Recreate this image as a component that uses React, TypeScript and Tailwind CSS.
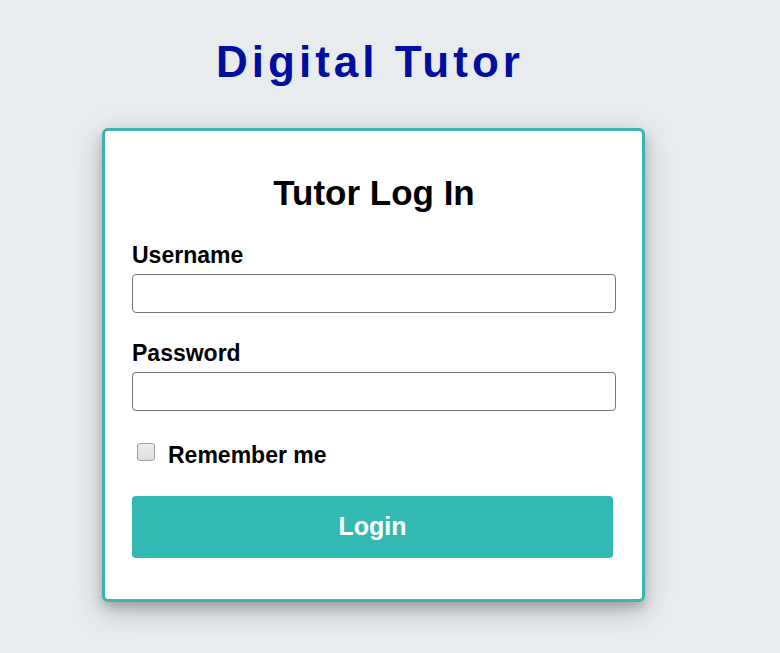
export default function App() {
  return (
    <main className="flex min-h-screen flex-col items-center bg-[#e8ecef] pr-[33px] pt-8 font-['Liberation_Sans',Arial,sans-serif] text-black">
      <h1 className="pr-[7px] text-[44px] leading-[60px] font-bold tracking-[4px] text-[#000f9f]">Digital Tutor</h1>
      <form className="mt-9 w-full max-w-[543px] rounded-[6px] border-3 border-[#3cb3ae] bg-white pt-10 pr-[26px] pb-[41px] pl-[27px] shadow-[0_6px_12px_rgba(0,0,0,0.2),0_9px_30px_rgba(0,0,0,0.19)]" onSubmit={(e) => e.preventDefault()}>
        <h2 className="text-center text-[35px] leading-[44px] font-bold">Tutor Log In</h2>
        <label htmlFor="username" className="mt-6 block text-[23px] leading-[33px] font-bold">Username</label>
        <input id="username" type="text" className="mt-0.5 block h-[39px] w-full rounded-sm border border-[#767676] bg-white px-2" />
        <label htmlFor="password" className="mt-6 block text-[23px] leading-[33px] font-bold">Password</label>
        <input id="password" type="password" className="mt-0.5 block h-[39px] w-full rounded-sm border border-[#767676] bg-white px-2" />
        <div className="mt-7 flex items-start gap-[13px] pl-[5px]">
          <input id="remember" type="checkbox" className="mt-1 size-[18px] appearance-none rounded-[3px] border border-[#a3a3a3] bg-linear-to-b from-[#ededed] to-[#dedede] checked:bg-[#33b9b4] checked:bg-none" />
          <label htmlFor="remember" className="text-[23px] leading-[33px] font-bold">Remember me</label>
        </div>
        <div className="mt-6 pr-[3px]">
          <button type="submit" className="block h-[62px] w-full rounded-sm bg-[#33b9b4] text-[25px] font-bold text-white">Login</button>
        </div>
      </form>
    </main>
  );
}
